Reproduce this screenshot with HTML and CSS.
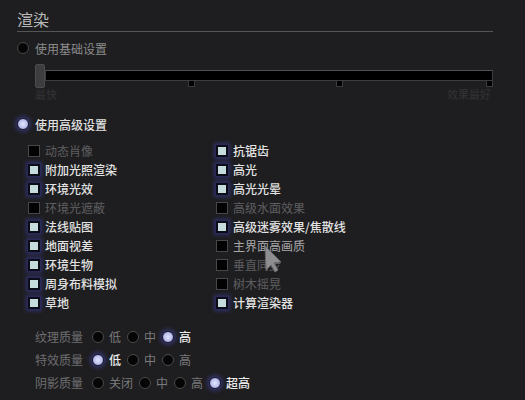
FILE: index.html
```html
<!DOCTYPE html>
<html lang="zh-CN">
<head>
  <meta charset="UTF-8" />
  <title>渲染设置</title>
  <link rel="stylesheet" href="styles.css">
</head>
<body>

  <div class="panel">
    <h1 class="title">渲染</h1>

    <!-- basic preset -->
    <div class="mode">
      <span class="radio"></span>
      <span class="mode-label">使用基础设置</span>
    </div>

    <div class="slider">
      <div class="slider-bar">
        <span class="thumb"></span>
        <div class="track">
          <span class="tick t1"></span>
          <span class="tick t2"></span>
          <span class="tick t3"></span>
        </div>
      </div>
      <div class="slider-labels">
        <span>最快</span>
        <span>效果最好</span>
      </div>
    </div>

    <!-- advanced preset -->
    <div class="mode advanced">
      <span class="radio on"></span>
      <span class="mode-label on">使用高级设置</span>
    </div>

    <div class="options">
      <div class="col">
        <label class="opt off"><span class="box"></span>动态肖像</label>
        <label class="opt"><span class="box on"></span>附加光照渲染</label>
        <label class="opt"><span class="box on"></span>环境光效</label>
        <label class="opt off"><span class="box"></span>环境光遮蔽</label>
        <label class="opt"><span class="box on"></span>法线贴图</label>
        <label class="opt"><span class="box on"></span>地面视差</label>
        <label class="opt"><span class="box on"></span>环境生物</label>
        <label class="opt"><span class="box on"></span>周身布料模拟</label>
        <label class="opt"><span class="box on"></span>草地</label>
      </div>
      <div class="col">
        <label class="opt"><span class="box on"></span>抗锯齿</label>
        <label class="opt"><span class="box on"></span>高光</label>
        <label class="opt"><span class="box on"></span>高光光晕</label>
        <label class="opt off"><span class="box"></span>高级水面效果</label>
        <label class="opt"><span class="box on"></span>高级迷雾效果/焦散线</label>
        <label class="opt plain"><span class="box"></span>主界面高画质</label>
        <label class="opt off"><span class="box"></span>垂直同步</label>
        <label class="opt off"><span class="box"></span>树木摇晃</label>
        <label class="opt"><span class="box on"></span>计算渲染器</label>
      </div>
    </div>

    <!-- quality levels -->
    <div class="quality">
      <div class="q-row">
        <span class="q-label">纹理质量</span>
        <span class="q-opt"><span class="radio small"></span>低</span>
        <span class="q-opt"><span class="radio small"></span>中</span>
        <span class="q-opt on"><span class="radio small on"></span>高</span>
      </div>
      <div class="q-row">
        <span class="q-label">特效质量</span>
        <span class="q-opt on"><span class="radio small on"></span>低</span>
        <span class="q-opt"><span class="radio small"></span>中</span>
        <span class="q-opt"><span class="radio small"></span>高</span>
      </div>
      <div class="q-row">
        <span class="q-label">阴影质量</span>
        <span class="q-opt"><span class="radio small"></span>关闭</span>
        <span class="q-opt"><span class="radio small"></span>中</span>
        <span class="q-opt"><span class="radio small"></span>高</span>
        <span class="q-opt on"><span class="radio small on"></span>超高</span>
      </div>
    </div>
  </div>

  <!-- mouse pointer -->
  <svg class="cursor" width="20" height="28" viewBox="0 0 20 28">
    <polygon points="1,1 2,25 7,20 11,27 14,25 10,18 17,17" fill="#8e8e90" stroke="#6a6a6c" stroke-width="1"/>
  </svg>

</body>
</html>
```

FILE: styles.css
```css
body {
  margin: 0;
  padding: 0;
  background: #1e1e20;
  font-family: "Noto Sans CJK SC", "Noto Sans", sans-serif;
  color: #ddd;
  width: 525px;
  height: 400px;
  overflow: hidden;
  position: relative;
}

.panel {
  padding: 9px 32px 0 17px;
}

.title {
  margin: 0;
  font-size: 16px;
  font-weight: normal;
  line-height: 21px;
  color: #b8b8b8;
  border-bottom: 1px solid #555;
  padding-bottom: 1px;
}

.mode {
  display: flex;
  align-items: center;
  height: 16px;
  margin-top: 8px;
}

.mode.advanced {
  margin-top: 16px;
}

.mode-label {
  margin-left: 6px;
  font-size: 12px;
  color: #8c8c8c;
}

.mode-label.on {
  color: #e0e0e0;
  font-weight: 500;
}

/* radio buttons */
.radio {
  display: inline-block;
  width: 10px;
  height: 10px;
  border-radius: 50%;
  background: #050505;
  border: 1px solid #4a4a4a;
  box-sizing: content-box;
}

.radio.on {
  background: radial-gradient(circle, #e4e6ff 0%, #b8bcec 60%, #8a8ed0 100%);
  border: 1px solid #1c1c30;
  box-shadow: 0 0 0 1px #2e2e58, 0 0 4px 2px #33336a;
}

.radio.small {
  width: 10px;
  height: 10px;
}

/* quality slider */
.slider {
  margin: 7px 0 0 18px;
}

.slider-bar {
  display: flex;
  align-items: center;
  height: 26px;
}

.thumb {
  width: 8px;
  height: 22px;
  background: #3d3d3f;
  border: 1px solid #4c4c4e;
  border-radius: 2px;
}

.track {
  position: relative;
  flex: 1;
  height: 9px;
  background: #000;
  border: 1px solid #3c3c3e;
  border-top-color: #505052;
  margin-top: -1px;
}

.tick {
  position: absolute;
  top: 10px;
  width: 5px;
  height: 5px;
  background: #000;
  border: 1px solid #3c3c3e;
  border-top: none;
}

.t1 { left: 142px; }
.t2 { left: 290px; }
.t3 { right: -1px; }

.slider-labels {
  display: flex;
  justify-content: space-between;
  font-size: 11px;
  line-height: 12px;
  color: #333335;
  padding-right: 2px;
  margin-top: -1px;
}

/* checkbox grid */
.options {
  display: flex;
  margin: 9px 0 0 11px;
}

.col {
  display: flex;
  flex-direction: column;
  width: 188px;
}

.opt {
  display: flex;
  align-items: center;
  height: 19px;
  font-size: 12px;
  color: #e2e2e2;
  font-weight: 500;
}

.opt.off {
  color: #5e5e60;
  font-weight: normal;
}

.opt.plain {
  color: #a8a8a8;
  font-weight: normal;
}

.box {
  display: inline-block;
  width: 10px;
  height: 10px;
  margin-right: 5px;
  background: #020202;
  border: 1px solid #48484a;
  box-sizing: content-box;
}

.box.on {
  background: #c6dcdc;
  border: 2px solid #0c0c18;
  width: 8px;
  height: 8px;
  box-shadow: 0 0 0 1px #2a2a58, 0 0 4px 2px #30306a;
}

/* quality radio rows */
.quality {
  margin: 13px 0 0 18px;
}

.q-row {
  display: flex;
  align-items: center;
  height: 23px;
  font-size: 12px;
}

.q-label {
  color: #6e6e70;
  margin-right: 9px;
}

.q-opt {
  display: flex;
  align-items: center;
  margin-right: 6px;
  color: #7a7a7c;
}

.q-opt .radio {
  margin-right: 5px;
}

.q-opt.on {
  color: #ececec;
  font-weight: 500;
}

.cursor {
  position: absolute;
  left: 264px;
  top: 245px;
}
```
